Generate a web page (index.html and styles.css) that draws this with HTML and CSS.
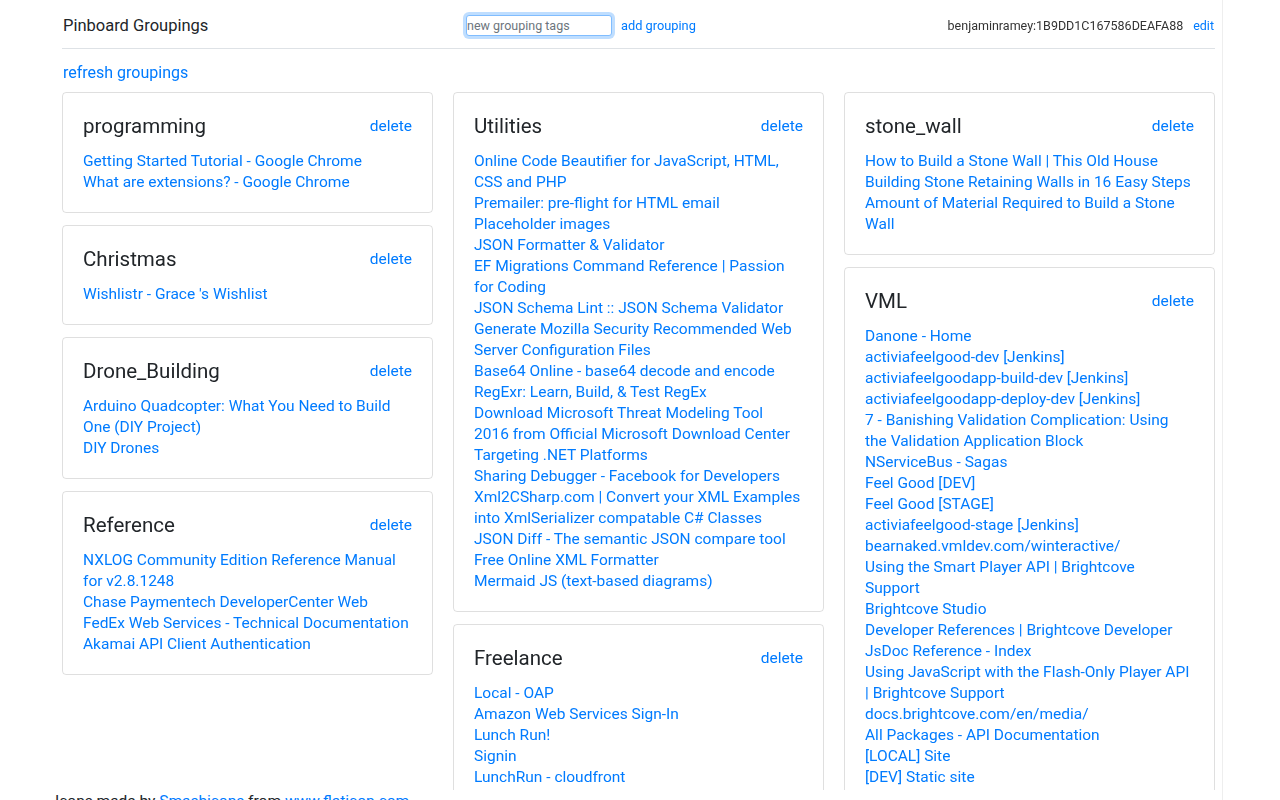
FILE: index.html
```html
<!DOCTYPE html>
<html>
<head>
  <meta charset="utf-8" />
  <title>Pinboard Groupings</title>
  <link rel="stylesheet" href="styles.css">
</head>
<body>
  <div class="page">
    <header class="topbar">
      <div class="brand">Pinboard Groupings</div>
      <form class="add-form">
        <input type="text" class="tags-input" placeholder="new grouping tags" autofocus>
        <a href="#">add grouping</a>
      </form>
      <div class="account">
        <span class="token">benjaminramey:1B9DD1C167586DEAFA88</span>
        <a href="#">edit</a>
      </div>
    </header>

    <a href="#" class="refresh">refresh groupings</a>

    <div class="groupings">
      <div class="column">
        <div class="card">
          <div class="card-head"><h5>programming</h5><a href="#">delete</a></div>
          <div class="links">
            <a href="#">Getting Started Tutorial - Google Chrome</a>
            <a href="#">What are extensions? - Google Chrome</a>
          </div>
        </div>
        <div class="card">
          <div class="card-head"><h5>Christmas</h5><a href="#">delete</a></div>
          <div class="links">
            <a href="#">Wishlistr - Grace 's Wishlist</a>
          </div>
        </div>
        <div class="card">
          <div class="card-head"><h5>Drone_Building</h5><a href="#">delete</a></div>
          <div class="links">
            <a href="#">Arduino Quadcopter: What You Need to Build One (DIY Project)</a>
            <a href="#">DIY Drones</a>
          </div>
        </div>
        <div class="card">
          <div class="card-head"><h5>Reference</h5><a href="#">delete</a></div>
          <div class="links">
            <a href="#">NXLOG Community Edition Reference Manual for v2.8.1248</a>
            <a href="#">Chase Paymentech DeveloperCenter Web</a>
            <a href="#">FedEx Web Services - Technical Documentation</a>
            <a href="#">Akamai API Client Authentication</a>
          </div>
        </div>
      </div>

      <div class="column">
        <div class="card">
          <div class="card-head"><h5>Utilities</h5><a href="#">delete</a></div>
          <div class="links">
            <a href="#">Online Code Beautifier for JavaScript, HTML, CSS and PHP</a>
            <a href="#">Premailer: pre-flight for HTML email</a>
            <a href="#">Placeholder images</a>
            <a href="#">JSON Formatter &amp; Validator</a>
            <a href="#">EF Migrations Command Reference | Passion for Coding</a>
            <a href="#">JSON Schema Lint :: JSON Schema Validator</a>
            <a href="#">Generate Mozilla Security Recommended Web Server Configuration Files</a>
            <a href="#">Base64 Online - base64 decode and encode</a>
            <a href="#">RegExr: Learn, Build, &amp; Test RegEx</a>
            <a href="#">Download Microsoft Threat Modeling Tool 2016 from Official Microsoft Download Center</a>
            <a href="#">Targeting .NET Platforms</a>
            <a href="#">Sharing Debugger - Facebook for Developers</a>
            <a href="#">Xml2CSharp.com | Convert your XML Examples into XmlSerializer compatable C# Classes</a>
            <a href="#">JSON Diff - The semantic JSON compare tool</a>
            <a href="#">Free Online XML Formatter</a>
            <a href="#">Mermaid JS (text-based diagrams)</a>
          </div>
        </div>
        <div class="card">
          <div class="card-head"><h5>Freelance</h5><a href="#">delete</a></div>
          <div class="links">
            <a href="#">Local - OAP</a>
            <a href="#">Amazon Web Services Sign-In</a>
            <a href="#">Lunch Run!</a>
            <a href="#">Signin</a>
            <a href="#">LunchRun - cloudfront</a>
            <a href="#">LunchRun - Staging</a>
          </div>
        </div>
      </div>

      <div class="column">
        <div class="card">
          <div class="card-head"><h5>stone_wall</h5><a href="#">delete</a></div>
          <div class="links">
            <a href="#">How to Build a Stone Wall | This Old House</a>
            <a href="#">Building Stone Retaining Walls in 16 Easy Steps</a>
            <a href="#">Amount of Material Required to Build a Stone Wall</a>
          </div>
        </div>
        <div class="card">
          <div class="card-head"><h5>VML</h5><a href="#">delete</a></div>
          <div class="links">
            <a href="#">Danone - Home</a>
            <a href="#">activiafeelgood-dev [Jenkins]</a>
            <a href="#">activiafeelgoodapp-build-dev [Jenkins]</a>
            <a href="#">activiafeelgoodapp-deploy-dev [Jenkins]</a>
            <a href="#">7 - Banishing Validation Complication: Using the Validation Application Block</a>
            <a href="#">NServiceBus - Sagas</a>
            <a href="#">Feel Good [DEV]</a>
            <a href="#">Feel Good [STAGE]</a>
            <a href="#">activiafeelgood-stage [Jenkins]</a>
            <a href="#">bearnaked.vmldev.com/winteractive/</a>
            <a href="#">Using the Smart Player API | Brightcove Support</a>
            <a href="#">Brightcove Studio</a>
            <a href="#">Developer References | Brightcove Developer</a>
            <a href="#">JsDoc Reference - Index</a>
            <a href="#">Using JavaScript with the Flash-Only Player API | Brightcove Support</a>
            <a href="#">docs.brightcove.com/en/media/</a>
            <a href="#">All Packages - API Documentation</a>
            <a href="#">[LOCAL] Site</a>
            <a href="#">[DEV] Static site</a>
            <a href="#">[STAGE] Static site</a>
          </div>
        </div>
      </div>
    </div>

    <footer class="credits">
      Icons made by <a href="#">Smashicons</a> from <a href="#">www.flaticon.com</a>
    </footer>
  </div>
</body>
</html>
```
FILE: styles.css
```css
/* Bootstrap-ish look: plain white page, bordered cards in three columns */

html, body {
  margin: 0;
  padding: 0;
  height: 100%;
}

body {
  font-family: Roboto, Arial, sans-serif;
  font-size: 15.5px;
  color: #212529;
  background: #fff;
  overflow: hidden;
}

a {
  color: #007bff;
  text-decoration: none;
}

.page {
  width: 1153px;
  min-height: 100%;
  padding: 0 7px 0 62px;
  border-right: 1px solid #eeeeee;
}

/* Top bar: title, new grouping form, account */
.topbar {
  display: grid;
  grid-template-columns: 404px auto 1fr;
  align-items: center;
  height: 48px;
  border-bottom: 1px solid #dee2e6;
}

.brand {
  font-size: 16.5px;
  padding-left: 1px;
  padding-top: 2px;
}

.add-form {
  display: flex;
  align-items: center;
  gap: 9px;
  font-size: 12.8px;
  padding-top: 2px;
}

.tags-input {
  width: 144px;
  height: 19px;
  padding: 0;
  margin: 0;
  border: 1px solid #80bdff;
  border-radius: 3px;
  font-family: inherit;
  font-size: 12.5px;
  color: #495057;
  outline: none;
  box-shadow: 0 0 0 3px rgba(0, 123, 255, 0.25);
}

.tags-input::placeholder {
  color: #6c757d;
}

.account {
  justify-self: end;
  display: flex;
  align-items: center;
  gap: 10px;
  font-size: 12.5px;
  padding-top: 2px;
  padding-right: 1px;
}

.token {
  color: #333;
}

.refresh {
  display: inline-block;
  margin: 13px 0 0 1px;
  font-size: 16px;
  line-height: 22px;
}

/* Grouping cards, clipped at the bottom of the window */
.groupings {
  display: grid;
  grid-template-columns: repeat(3, 1fr);
  column-gap: 20px;
  align-items: start;
  margin-top: 8px;
  height: 698px;
  overflow: hidden;
}

.column {
  display: flex;
  flex-direction: column;
  gap: 12px;
}

.card {
  border: 1px solid rgba(0, 0, 0, 0.125);
  border-radius: 4px;
  padding: 21px 20px 19px;
}

.card-head {
  display: flex;
  justify-content: space-between;
  align-items: center;
  margin-bottom: 13px;
}

.card-head h5 {
  margin: 0;
  font-size: 20.5px;
  font-weight: 400;
  line-height: 24px;
}

.links {
  padding-right: 2px;
}

.links a {
  display: block;
  line-height: 21px;
}

.credits {
  margin-left: -7px;
  line-height: 22px;
}
```
